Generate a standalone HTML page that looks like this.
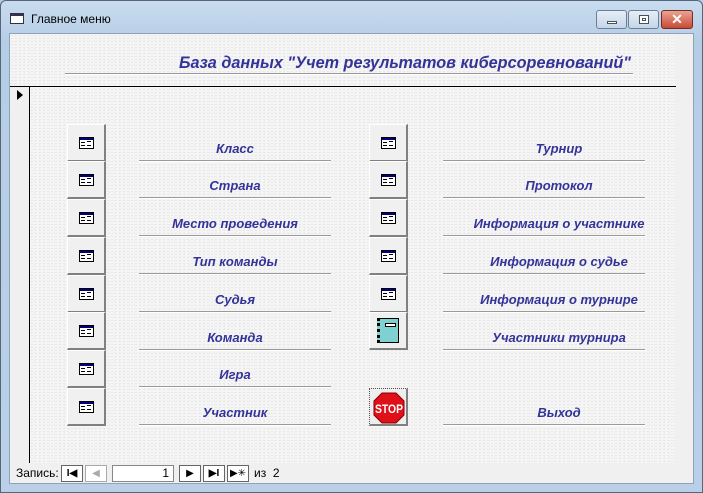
<!DOCTYPE html><html><head><meta charset="utf-8"><style>
*{margin:0;padding:0;box-sizing:border-box}
body{width:703px;height:493px;overflow:hidden;background:#b4cbe4;font-family:"Liberation Sans",sans-serif;position:relative}
.a{position:absolute}
.frame{left:0;top:0;width:703px;height:493px;background:linear-gradient(#c9dcef,#b6cde6 40px,#b9d0e8);border:1px solid #55667a;border-radius:6px 6px 0 0}
.content{left:9px;top:33px;width:685px;height:451px;background:#f0f0f0;border:1px solid #8ea3ba}
.tex{background-color:#f5f5f5;background-image:radial-gradient(#dcdcdc 0.5px,transparent 0.8px),radial-gradient(#e2e2e2 0.5px,transparent 0.8px);background-size:4px 3px,5px 4px;background-position:0 0,2px 1px}
.lbl{color:#333399;font-weight:bold;font-style:italic;font-size:13px;text-align:center;width:192px}
.ln{height:2px;background:#9a9a9a;border-bottom:1px solid #fff}
.btn{width:39px;height:38px;background:#f0f0f0;border-top:1px solid #fff;border-left:1px solid #fff;border-right:2px solid #808080;border-bottom:2px solid #808080}
.ic{position:absolute;left:11px;top:12px;width:15px;height:12px;border:1px solid #000;background:#fff}
.ic:before{content:"";position:absolute;left:0;top:0;right:0;height:2px;background:#000080}
.ic:after{content:"";position:absolute;left:1px;top:4px;width:4px;height:1px;background:#000;box-shadow:0 3px #000,6px -1px 0 0 #000,6px 3px #000}
.nb{width:22px;height:17px;border:1px solid #666;background:#fff}
.nbt{font-size:12px;color:#000}
</style></head><body>
<div class="a frame"></div>
<div class="a" style="left:10px;top:13px;width:14px;height:11px;border:1px solid #333;background:#fff"><div style="height:2px;background:#335"></div></div>
<div class="a" style="left:31px;top:12px;font-size:12px;color:#000">Главное меню</div>
<div class="a" style="left:596px;top:10px;width:31px;height:19px;border:1px solid #6d7f95;border-radius:3px;background:linear-gradient(#e6eef7,#c5d5e8)"><div style="position:absolute;left:10px;top:10px;width:10px;height:3px;background:#fff;border:1px solid #455"></div></div>
<div class="a" style="left:628px;top:10px;width:31px;height:19px;border:1px solid #6d7f95;border-radius:3px;background:linear-gradient(#e6eef7,#c5d5e8)"><div style="position:absolute;left:10px;top:4px;width:10px;height:9px;border:1px solid #455;background:#fff"><div style="margin:2px;height:3px;border:1px solid #455"></div></div></div>
<div class="a" style="left:661px;top:10px;width:32px;height:19px;border:1px solid #7a2a1f;border-radius:3px;background:linear-gradient(#e9a493,#c84b35);color:#fff;font-weight:bold;font-size:14px;text-align:center;line-height:17px">✕</div>
<div class="a content"></div>
<div class="a tex" style="left:10px;top:34px;width:666px;height:429px"></div>
<div class="a" style="left:179px;top:53px;color:#333399;font-weight:bold;font-style:italic;font-size:17px;white-space:nowrap;transform:scaleX(0.955);transform-origin:0 0">База данных "Учет результатов киберсоревнований"</div>
<div class="a ln" style="left:65px;top:73px;width:568px"></div>
<div class="a" style="left:10px;top:86px;width:666px;height:1px;background:#000"></div>
<div class="a" style="left:10px;top:87px;width:20px;height:376px;background:#f0f0f0;border-right:1px solid #000"></div>
<div class="a" style="left:17px;top:90px;width:0;height:0;border-left:6px solid #000;border-top:5px solid transparent;border-bottom:5px solid transparent"></div>

<div class="a btn" style="left:67px;top:124px"><div class="ic"></div></div>
<div class="a btn" style="left:67px;top:161px"><div class="ic"></div></div>
<div class="a btn" style="left:67px;top:199px"><div class="ic"></div></div>
<div class="a btn" style="left:67px;top:237px"><div class="ic"></div></div>
<div class="a btn" style="left:67px;top:275px"><div class="ic"></div></div>
<div class="a btn" style="left:67px;top:312px"><div class="ic"></div></div>
<div class="a btn" style="left:67px;top:350px"><div class="ic"></div></div>
<div class="a btn" style="left:67px;top:388px"><div class="ic"></div></div>

<div class="a btn" style="left:369px;top:124px"><div class="ic"></div></div>
<div class="a btn" style="left:369px;top:161px"><div class="ic"></div></div>
<div class="a btn" style="left:369px;top:199px"><div class="ic"></div></div>
<div class="a btn" style="left:369px;top:237px"><div class="ic"></div></div>
<div class="a btn" style="left:369px;top:275px"><div class="ic"></div></div>
<div class="a btn" style="left:369px;top:312px"><div style="position:absolute;left:7px;top:5px;width:22px;height:25px;background:#7fd0d0;border:1px solid #000;border-left:3px dotted #000"><div style="margin:4px 0 0 5px;width:11px;height:4px;background:#fff;border:1px solid #000"></div></div></div>
<div class="a" style="left:369px;top:388px;width:39px;height:38px;background:#eee;border:1px dotted #555;border-right:2px solid #808080;border-bottom:2px solid #808080"><svg width="36" height="36" style="position:absolute;left:1px;top:1px"><polygon points="11,3 25,3 33,11 33,25 25,33 11,33 3,25 3,11" fill="#e0101a" stroke="#800" stroke-width="1"/><text x="18" y="23" text-anchor="middle" fill="#fff" font-family="Liberation Sans" font-weight="bold" font-size="12" textLength="28" lengthAdjust="spacingAndGlyphs">STOP</text></svg></div>

<div class="a lbl" style="left:139px;top:141px">Класс</div>
<div class="a ln" style="left:139px;top:160px;width:192px"></div>
<div class="a lbl" style="left:139px;top:178px">Страна</div>
<div class="a ln" style="left:139px;top:197px;width:192px"></div>
<div class="a lbl" style="left:139px;top:216px">Место проведения</div>
<div class="a ln" style="left:139px;top:235px;width:192px"></div>
<div class="a lbl" style="left:139px;top:254px">Тип команды</div>
<div class="a ln" style="left:139px;top:273px;width:192px"></div>
<div class="a lbl" style="left:139px;top:292px">Судья</div>
<div class="a ln" style="left:139px;top:311px;width:192px"></div>
<div class="a lbl" style="left:139px;top:330px">Команда</div>
<div class="a ln" style="left:139px;top:349px;width:192px"></div>
<div class="a lbl" style="left:139px;top:367px">Игра</div>
<div class="a ln" style="left:139px;top:386px;width:192px"></div>
<div class="a lbl" style="left:139px;top:405px">Участник</div>
<div class="a ln" style="left:139px;top:424px;width:192px"></div>

<div class="a lbl" style="left:458px;top:141px;width:202px">Турнир</div>
<div class="a ln" style="left:443px;top:160px;width:202px"></div>
<div class="a lbl" style="left:458px;top:178px;width:202px">Протокол</div>
<div class="a ln" style="left:443px;top:197px;width:202px"></div>
<div class="a lbl" style="left:458px;top:216px;width:202px">Информация о участнике</div>
<div class="a ln" style="left:443px;top:235px;width:202px"></div>
<div class="a lbl" style="left:458px;top:254px;width:202px">Информация о судье</div>
<div class="a ln" style="left:443px;top:273px;width:202px"></div>
<div class="a lbl" style="left:458px;top:292px;width:202px">Информация о турнире</div>
<div class="a ln" style="left:443px;top:311px;width:202px"></div>
<div class="a lbl" style="left:458px;top:330px;width:202px">Участники турнира</div>
<div class="a ln" style="left:443px;top:349px;width:202px"></div>
<div class="a lbl" style="left:458px;top:405px;width:202px">Выход</div>
<div class="a ln" style="left:443px;top:424px;width:202px"></div>

<div class="a nbt" style="left:16px;top:466px">Запись:</div>
<div class="a nb" style="left:61px;top:465px;font-size:10px;font-weight:bold;text-align:center;line-height:15px">I◀</div>
<div class="a nb" style="left:85px;top:465px;font-size:10px;color:#aaa;border-color:#aaa;text-align:center;line-height:15px">◀</div>
<div class="a nb" style="left:112px;top:465px;width:62px;border-color:#888;text-align:right;padding-right:4px;font-size:12px;line-height:15px">1</div>
<div class="a nb" style="left:179px;top:465px;font-size:10px;text-align:center;line-height:15px">▶</div>
<div class="a nb" style="left:203px;top:465px;font-size:10px;font-weight:bold;text-align:center;line-height:15px">▶I</div>
<div class="a nb" style="left:227px;top:465px;font-size:10px;text-align:center;line-height:15px">▶✳</div>
<div class="a nbt" style="left:254px;top:466px">из&nbsp; 2</div>
</body></html>
